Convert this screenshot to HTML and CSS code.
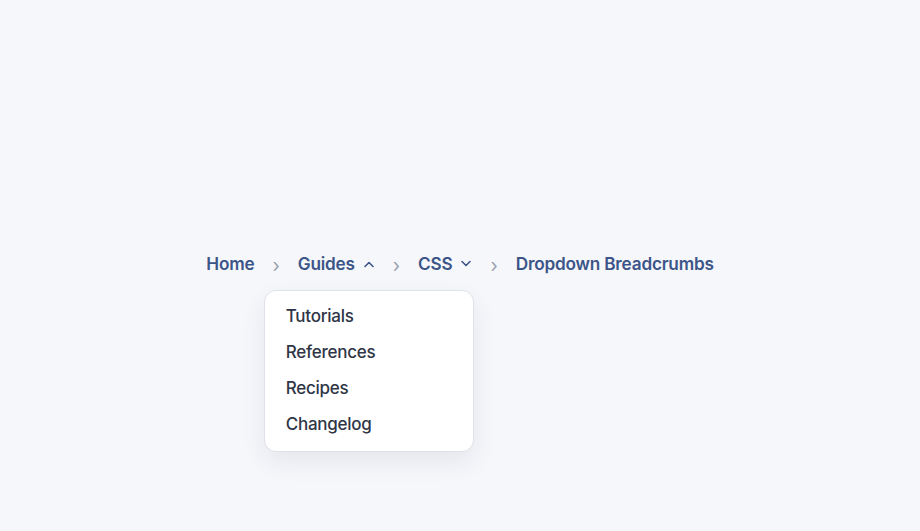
FILE: index.html
```html
<!DOCTYPE html>
<html lang="en">
<head>
    <meta charset="UTF-8">
    <meta name="viewport" content="width=device-width, initial-scale=1.0">
    <title>Dropdown Breadcrumbs</title>
    <link rel="stylesheet" href="styles.css">
</head>
<body>
    <nav class="breadcrumbs" aria-label="Breadcrumb">
        <ol>
            <li class="crumb"><a href="#">Home</a></li>
            <li class="sep" aria-hidden="true">›</li>
            <li class="crumb has-menu open">
                <a href="#">Guides</a>
                <svg class="caret" viewBox="0 0 12 8" width="12" height="8"><polyline points="2,6.5 6,2.5 10,6.5"/></svg>
                <ul class="menu">
                    <li><a href="#">Tutorials</a></li>
                    <li><a href="#">References</a></li>
                    <li><a href="#">Recipes</a></li>
                    <li><a href="#">Changelog</a></li>
                </ul>
            </li>
            <li class="sep" aria-hidden="true">›</li>
            <li class="crumb has-menu">
                <a href="#">CSS</a>
                <svg class="caret" viewBox="0 0 12 8" width="12" height="8"><polyline points="2,1.5 6,5.5 10,1.5"/></svg>
            </li>
            <li class="sep" aria-hidden="true">›</li>
            <li class="crumb current"><a href="#" aria-current="page">Dropdown Breadcrumbs</a></li>
        </ol>
    </nav>
</body>
</html>
```

FILE: styles.css
```css
* {
    margin: 0;
    padding: 0;
    box-sizing: border-box;
    font-family: 'Inter', 'Noto Sans', sans-serif;
}

body {
    background-color: #f6f7fb;
    height: 100vh;
    display: flex;
    align-items: center;
    justify-content: center;
}

.breadcrumbs {
    margin-top: -4px;
}

.breadcrumbs ol {
    list-style: none;
    display: flex;
    align-items: center;
    gap: 18px;
}

.crumb {
    position: relative;
    display: flex;
    align-items: center;
    gap: 8px;
}

.crumb a {
    color: #3c5588;
    text-decoration: none;
    font-size: 17.2px;
    font-weight: 600;
    letter-spacing: -0.2px;
    line-height: 24px;
}

.caret {
    fill: none;
    stroke: #3c5588;
    stroke-width: 1.6;
    stroke-linecap: round;
    stroke-linejoin: round;
}

.sep {
    color: #9aa1ad;
    font-size: 19px;
    line-height: 24px;
    margin-top: 4px;
}

.menu {
    list-style: none;
    position: absolute;
    top: 38px;
    left: -34px;
    width: 210px;
    padding: 7px 0 8px;
    background: white;
    border: 1px solid #dfe2e8;
    border-radius: 12px;
    box-shadow: 0 10px 24px rgba(30, 40, 70, 0.08);
}

.menu a {
    display: block;
    padding: 6px 21px;
    color: #2f3546;
    font-size: 17px;
    font-weight: 500;
    letter-spacing: -0.25px;
    line-height: 24.3px;
}
```
